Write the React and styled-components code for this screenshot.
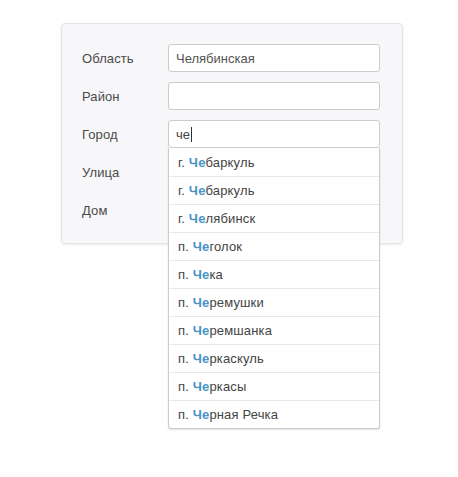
import React from 'react';
import styled, { createGlobalStyle } from 'styled-components';

const GlobalStyle = createGlobalStyle`
  html, body {
    margin: 0;
    background: #fff;
    font-family: "Liberation Sans", Arial, sans-serif;
    color: #333;
  }
`;

const Page = styled.div`
  box-sizing: border-box;
  min-height: 477px;
  padding: 23px 0 0 61px;
`;

const Card = styled.div`
  width: 342px;
  box-sizing: border-box;
  background: #f7f7f9;
  border: 1px solid #e3e3e8;
  border-radius: 4px;
  box-shadow: 0 1px 3px rgba(0, 0, 0, 0.08);
  padding: 20px 22px 19px 20px;
  display: flex;
  flex-direction: column;
  gap: 10px;
`;

const Row = styled.div`
  display: flex;
  align-items: center;
  height: 28px;
  position: relative;
  z-index: ${(p) => (p.$open ? 2 : 'auto')};
`;

const Label = styled.label`
  width: 86px;
  font-size: 13px;
  color: #4a4a4a;
  letter-spacing: 0.1px;
`;

const Input = styled.input`
  width: 212px;
  height: 28px;
  box-sizing: border-box;
  border: 1px solid #ccc;
  border-radius: 3px;
  background: #fff;
  padding: 0 7px;
  font: 13px "Liberation Sans", Arial, sans-serif;
  color: #555;
  outline: none;
`;

const FocusField = styled.div`
  width: 212px;
  height: 28px;
  box-sizing: border-box;
  border: 1px solid #ccc;
  border-radius: 3px;
  background: #fff;
  padding: 0 7px;
  font-size: 13px;
  color: #444;
  display: flex;
  align-items: center;
`;

const Caret = styled.span`
  display: inline-block;
  width: 1px;
  height: 15px;
  background: #333;
  margin-left: 1px;
`;

const Dropdown = styled.ul`
  position: absolute;
  top: 28px;
  left: 86px;
  width: 212px;
  box-sizing: border-box;
  margin: 0;
  padding: 0;
  list-style: none;
  background: #fff;
  border: 1px solid #ccc;
  border-top: none;
  border-radius: 0 0 3px 3px;
  box-shadow: 0 1px 2px rgba(0, 0, 0, 0.12);
`;

const Item = styled.li`
  height: 28px;
  box-sizing: border-box;
  padding: 0 8px 0 9px;
  display: flex;
  align-items: center;
  font-size: 13px;
  letter-spacing: 0.15px;
  color: #444;
  border-top: ${(p) => (p.$first ? 'none' : '1px solid #e8e8e8')};
`;

const Match = styled.b`
  color: #4a94c4;
  font-weight: bold;
`;

const places = [
  ['г.', 'баркуль'],
  ['г.', 'баркуль'],
  ['г.', 'лябинск'],
  ['п.', 'голок'],
  ['п.', 'ка'],
  ['п.', 'ремушки'],
  ['п.', 'ремшанка'],
  ['п.', 'ркаскуль'],
  ['п.', 'ркасы'],
  ['п.', 'рная Речка'],
];

export default function App() {
  return (
    <>
      <GlobalStyle />
      <Page>
        <Card>
          <Row>
            <Label>Область</Label>
            <Input defaultValue="Челябинская" />
          </Row>
          <Row>
            <Label>Район</Label>
            <Input />
          </Row>
          <Row $open>
            <Label>Город</Label>
            <FocusField>
              че<Caret />
            </FocusField>
            <Dropdown>
              {places.map(([type, rest], i) => (
                <Item key={i} $first={i === 0}>
                  {type}&nbsp;<Match>Че</Match>
                  {rest}
                </Item>
              ))}
            </Dropdown>
          </Row>
          <Row>
            <Label>Улица</Label>
            <Input />
          </Row>
          <Row>
            <Label>Дом</Label>
            <Input />
          </Row>
        </Card>
      </Page>
    </>
  );
}
